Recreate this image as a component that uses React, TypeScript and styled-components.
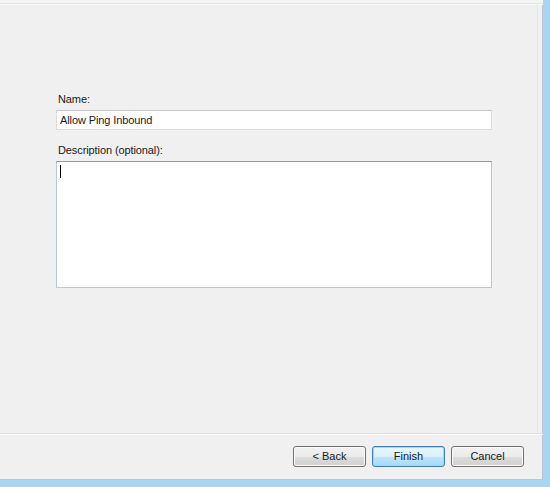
import styled, { createGlobalStyle } from "styled-components"

const GlobalStyle = createGlobalStyle`
  html, body {
    margin: 0;
    padding: 0;
    background: #f0f0f0;
  }
  * {
    box-sizing: border-box;
  }
`

const Window = styled.div`
  width: 550px;
  height: 487px;
  display: flex;
  flex-direction: column;
  background: #f0f0f0;
  border-right: 7px solid #a8d5f1;
  border-bottom: 7px solid #a8d5f1;
  box-shadow: inset -1px -1px 0 #bcc5d3;
  font-family: "Liberation Sans", Arial, sans-serif;
  font-size: 11px;
  color: #1a1a1a;
  overflow: hidden;
`

const HeaderRule = styled.div`
  height: 4px;
  flex: none;
  background: #f4f4f4;
  border-bottom: 1px solid #e4e4e4;
  box-shadow: 0 1px 0 #f9f9f9;
`

const Body = styled.div`
  flex: 1;
  display: flex;
  flex-direction: column;
  padding: 88px 0 0 56px;
  margin-right: 5px;
  border-right: 1px solid #e6e6e6;
`

const Form = styled.div`
  width: 436px;
  display: flex;
  flex-direction: column;
`

const Label = styled.label<{ $gap?: number }>`
  display: block;
  line-height: 15px;
  padding-left: 2px;
  margin-top: ${(p) => p.$gap ?? 0}px;
  margin-bottom: 3px;
  letter-spacing: -0.1px;
`

const TextInput = styled.div`
  height: 20px;
  background: #fff;
  border: 1px solid #dcdcdc;
  border-top-color: #c6c6c6;
  padding: 3px 3px;
  line-height: 13px;
  letter-spacing: -0.1px;
`

const TextArea = styled.div`
  height: 127px;
  background: #fff;
  border: 1px solid #b5c8da;
  border-top-color: #7f9db9;
  padding: 3px 3px;
`

const Caret = styled.span`
  display: inline-block;
  width: 1px;
  height: 13px;
  background: #000;
`

const Footer = styled.div`
  height: 47px;
  flex: none;
  display: flex;
  justify-content: flex-end;
  align-items: flex-start;
  gap: 6px;
  padding: 12px 19px 0 0;
  border-top: 1px solid #dfdfdf;
  box-shadow: inset 0 1px 0 #fff;
`

const Button = styled.button<{ $primary?: boolean }>`
  width: 73px;
  height: 21px;
  padding: 0 0 1px;
  font-family: "Liberation Sans", Arial, sans-serif;
  font-size: 11px;
  color: #1a1a1a;
  border-radius: 3px;
  border: 1px solid ${(p) => (p.$primary ? "#3c7fb1" : "#707070")};
  background: ${(p) =>
    p.$primary
      ? "linear-gradient(#eaf6fd 0%, #d9f0fc 50%, #bee6fd 51%, #a7d9f5 100%)"
      : "linear-gradient(#f2f2f2 0%, #ebebeb 50%, #dddddd 51%, #cfcfcf 100%)"};
  box-shadow: inset 0 0 0 1px ${(p) => (p.$primary ? "#9ed8f6" : "#fcfcfc")};
`

export default function App() {
  return (
    <>
      <GlobalStyle />
      <Window>
        <HeaderRule />
        <Body>
          <Form>
            <Label>Name:</Label>
            <TextInput>Allow Ping Inbound</TextInput>
            <Label $gap={13}>Description (optional):</Label>
            <TextArea>
              <Caret />
            </TextArea>
          </Form>
        </Body>
        <Footer>
          <Button>&lt; Back</Button>
          <Button $primary>Finish</Button>
          <Button>Cancel</Button>
        </Footer>
      </Window>
    </>
  )
}
